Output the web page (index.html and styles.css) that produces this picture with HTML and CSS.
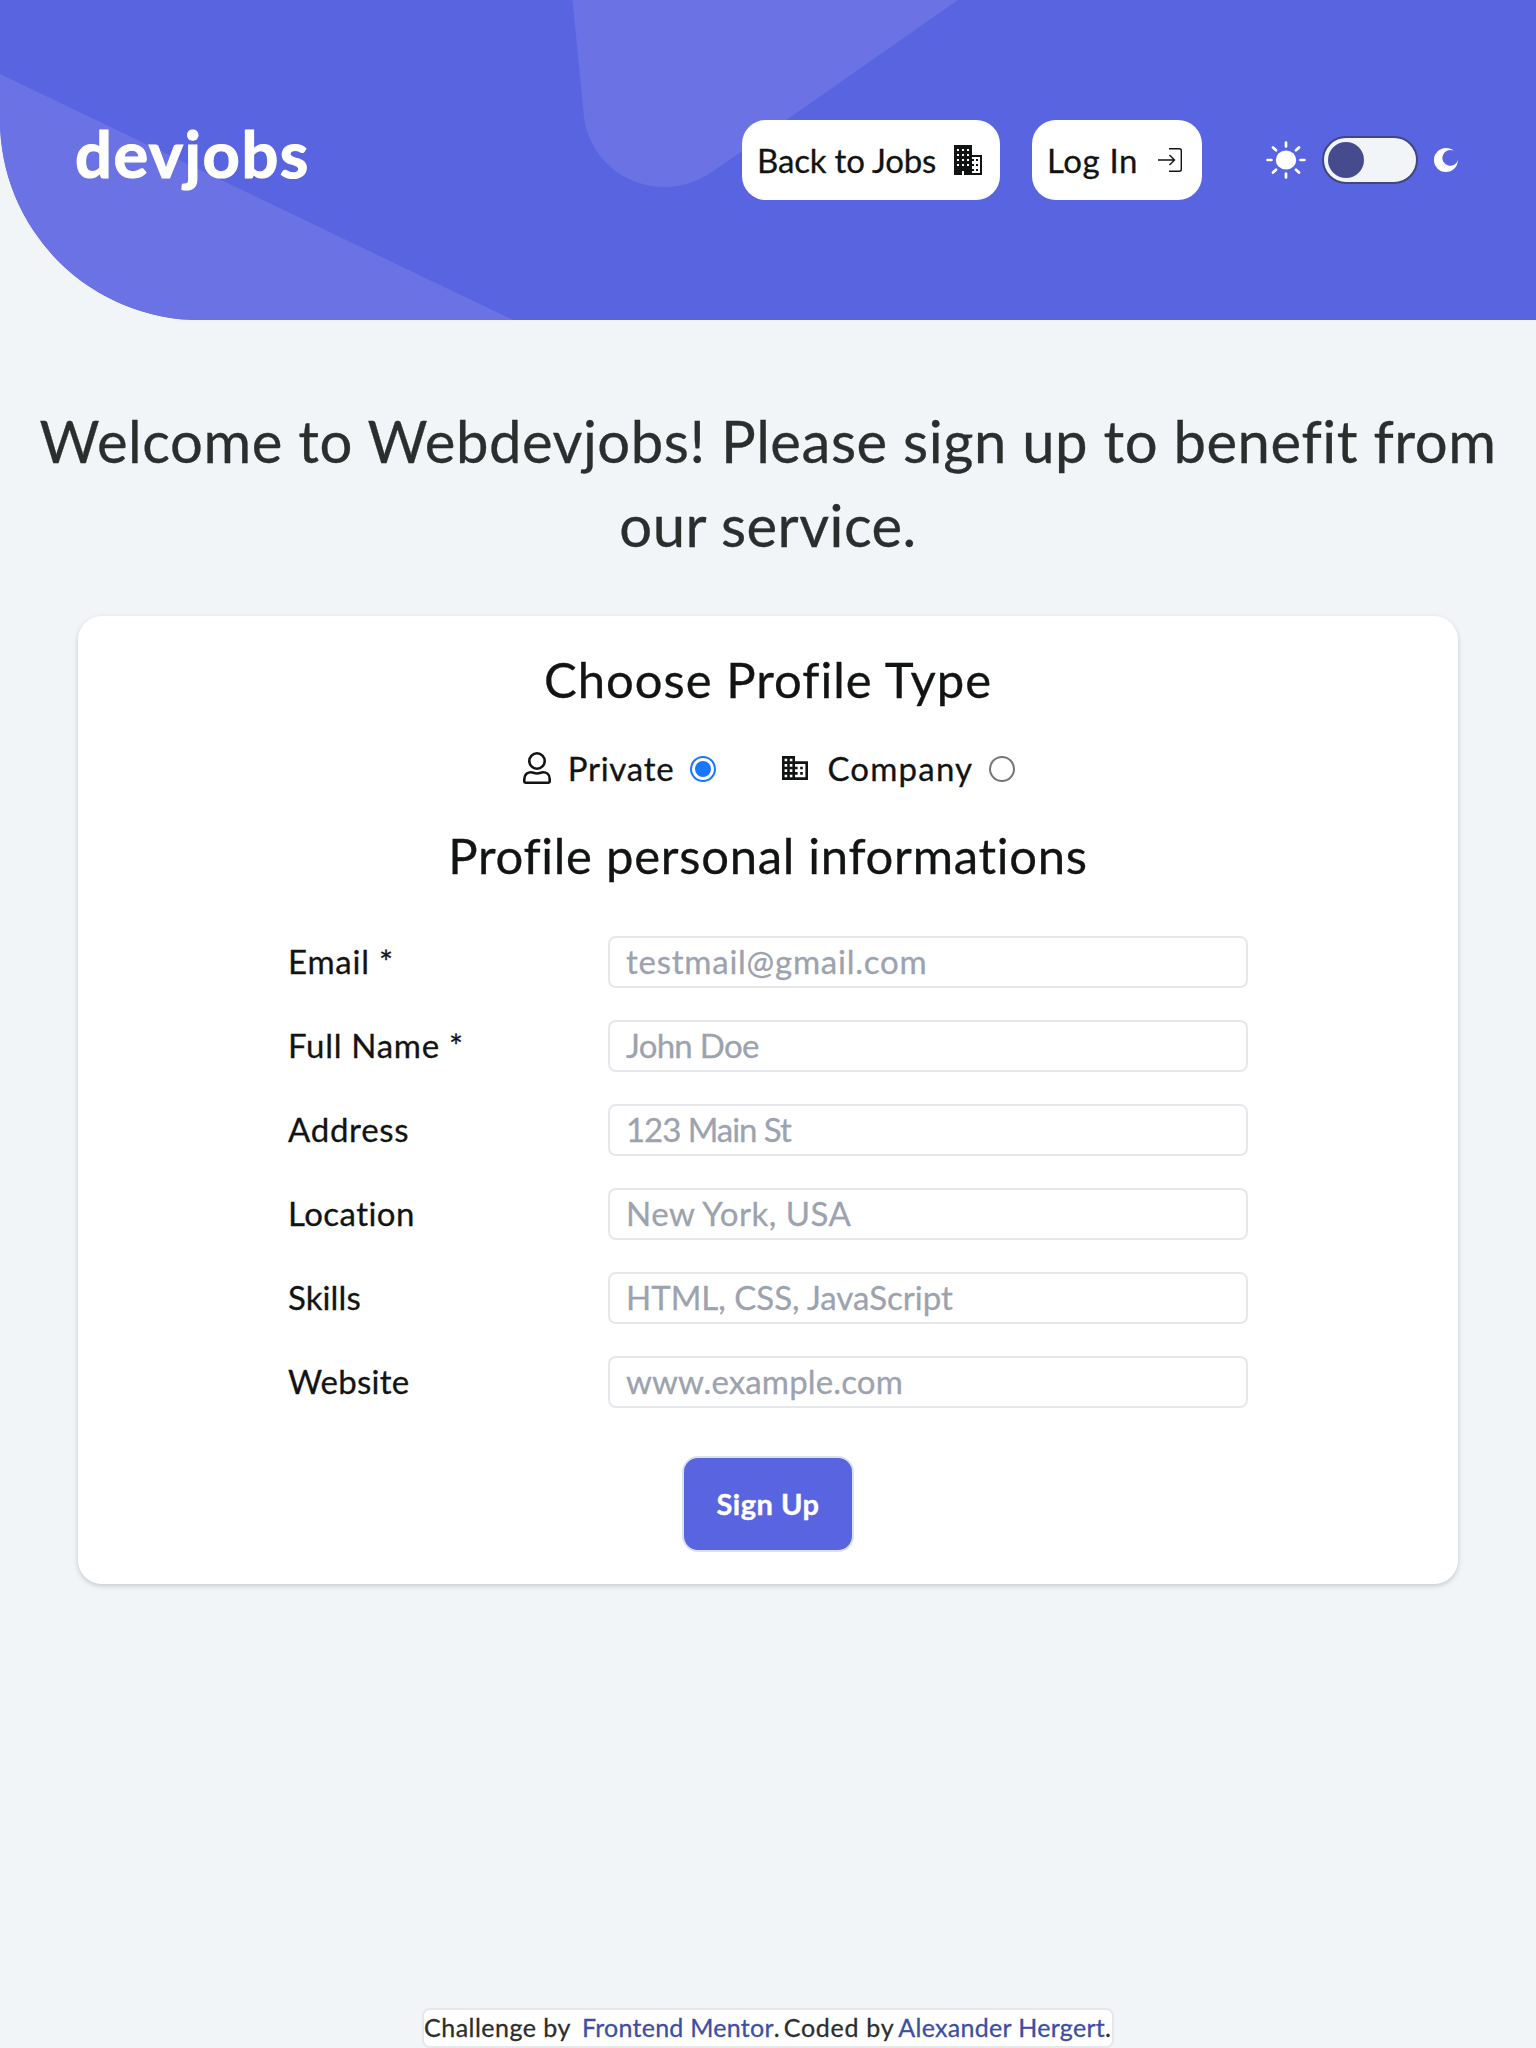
FILE: index.html
```html
<!DOCTYPE html>
<html lang="en">
<head>
<meta charset="utf-8">
<title>devjobs</title>
<link rel="stylesheet" href="styles.css">
</head>
<body>
<header class="header">
  <svg class="header-art" viewBox="0 0 1536 320" aria-hidden="true">
    <path d="M0 74L513 320H0Z"/>
    <path d="M572.500 0L584 117C589 157 623 187 665 187C682 187 698 181 712 172L958 0Z"/>
  </svg>
  <a class="logo">devjobs</a>
  <nav class="nav">
    <a class="nav-btn back"><span class="t-back">Back to Jobs</span>
      <svg class="ico-building" width="28" height="30" viewBox="0 0 28 30"><path fill="#121414" fill-rule="evenodd" d="M0 0H18V10H28V30H10V26H8V30H0ZM3 4V6H5V4ZM8 4V6H10V4ZM13 4V6H15V4ZM3 9V11H5V9ZM8 9V11H10V9ZM13 9V11H15V9ZM3 14V16H5V14ZM8 14V16H10V14ZM13 14V16H15V14ZM3 19V21H5V19ZM8 19V21H10V19ZM13 19V21H15V19ZM18 12V14H20V16H18V19H20V21H18V24H20V26H18V28H26V12ZM22 14H24V16H22ZM22 19H24V21H22ZM22 24H24V26H22Z"/></svg>
    </a>
    <a class="nav-btn login"><span class="t-login">Log In</span>
      <svg class="ico-login" width="24" height="24" viewBox="0 0 24 24" fill="none" stroke="#121414" stroke-width="1.400"><path d="M11 .7H21.300a2 2 0 0 1 2 2V21.300a2 2 0 0 1-2 2H11M0 12H16.500M11.500 7L16.500 12L11.500 17"/></svg>
    </a>
    <div class="theme">
      <svg class="ico-sun" width="40" height="38" viewBox="0 0 40 38"><ellipse cx="20" cy="19" rx="10.200" ry="9.600" fill="#fff"/><path fill="none" stroke="#fff" stroke-width="2.700" stroke-linecap="round" d="M20 1.500V5.500M20 32.500V36.500M1.500 19H5.500M34.500 19H38.500M7 6.500L10 9.300M33 6.500L30 9.300M7 31.500L10 28.700M33 31.500L30 28.700"/></svg>
      <span class="switch"><span class="knob"></span></span>
      <svg class="ico-moon" width="24" height="24" viewBox="0 0 24 24"><path fill="#fff" d="M12 0c3 0 5.700 1 8 2.800L18.500 2.300A7.900 7.900 0 1 0 23.900 12A12 12 0 1 1 12 0Z"/></svg>
    </div>
  </nav>
</header>
<main>
  <h1 class="title">Welcome to Webdevjobs! Please sign up to benefit from<br><span class="title-end">our service.</span></h1>
  <form class="card">
    <h2 class="h2 type">Choose Profile Type</h2>
    <div class="types">
      <label class="opt">
        <svg class="ico-user" width="28" height="32" viewBox="0 0 28 32" fill="none" stroke="#121414" stroke-width="2.600"><circle cx="14" cy="9" r="7.700"/><path d="M8 20.300C5 20.300 1.300 22 1.300 27V29.500a1.200 1.200 0 0 0 1.200 1.200H25.500a1.200 1.200 0 0 0 1.200-1.200V27C26.700 22 23 20.300 20 20.300C18 20.300 17 21.500 14 21.500S10 20.300 8 20.300Z"/></svg>
        <span class="t-private">Private</span><span class="radio on"></span>
      </label>
      <label class="opt">
        <svg class="ico-office" width="26" height="24" viewBox="2 3 20 18" preserveAspectRatio="none"><path fill="#121414" d="M12 7V3H2v18h20V7H12zM6 19H4v-2h2v2zm0-4H4v-2h2v2zm0-4H4V9h2v2zm0-4H4V5h2v2zm4 12H8v-2h2v2zm0-4H8v-2h2v2zm0-4H8V9h2v2zm0-4H8V5h2v2zm10 12h-8v-2h2v-2h-2v-2h2v-2h-2V9h8v10zm-2-8h-2v2h2v-2zm0 4h-2v2h2v-2z"/></svg>
        <span class="t-company">Company</span><span class="radio"></span>
      </label>
    </div>
    <h2 class="h2 info">Profile personal informations</h2>
    <div class="fields">
      <label class="f-email" for="email">Email *</label><input class="i-email" id="email" placeholder="testmail@gmail.com">
      <label class="f-name" for="name">Full Name *</label><input class="i-name" id="name" placeholder="John Doe">
      <label class="f-addr" for="addr">Address</label><input class="i-addr" id="addr" placeholder="123 Main St">
      <label class="f-loc" for="loc">Location</label><input class="i-loc" id="loc" placeholder="New York, USA">
      <label class="f-skills" for="skills">Skills</label><input class="i-skills" id="skills" placeholder="HTML, CSS, JavaScript">
      <label class="f-web" for="web">Website</label><input class="i-web" id="web" placeholder="www.example.com">
    </div>
    <button class="signup" type="button">Sign Up</button>
  </form>
</main>
<footer class="footer"><span class="c1">Challenge by</span><a class="c2">Frontend Mentor</a><span>.</span><span class="c3">Coded by</span><a class="c4">Alexander Hergert</a><span>.</span></footer>
</body>
</html>
```
FILE: styles.css
```css
* { box-sizing: border-box; }
body {
  margin: 0;
  height: 2048px;
  display: flex;
  flex-direction: column;
  align-items: stretch;
  overflow: hidden;
  background: #f1f5f8;
  color: #121414;
  font-family: Lato, "Liberation Sans", sans-serif;
  font-size: 33px;
  line-height: 48px;
  -webkit-text-stroke: 0.3px;
}
.header {
  position: relative;
  height: 320px;
  display: flex;
  justify-content: space-between;
  align-items: center;
  padding: 0 78px 0 75px;
  background: #5964e0;
  border-bottom-left-radius: 200px;
  overflow: hidden;
}
.header-art { position: absolute; inset: 0; fill: #6a72e4; }
.logo {
  position: relative;
  font-size: 65px;
  font-weight: 700;
  line-height: 80px;
  letter-spacing: 1.5px;
  -webkit-text-stroke: 1.2px;
  color: #fff;
  padding-bottom: 14px;
}
.nav { position: relative; display: flex; align-items: center; }
.nav-btn {
  height: 80px;
  display: flex;
  align-items: center;
  justify-content: space-between;
  background: #fff;
  border-radius: 24px;
  white-space: nowrap;
}
.nav-btn span { padding-bottom: 1px; }
.back { width: 258px; margin-right: 32px; padding: 0 18px 0 15px; }
.login { width: 170px; margin-right: 64px; padding: 0 20px 0 15px; }
.t-back { letter-spacing: -0.17px; }
.t-login { letter-spacing: 0.6px; }
.theme { display: flex; align-items: center; }
.switch {
  width: 96px;
  height: 48px;
  margin: 0 16px;
  padding: 4px;
  background: #f1f5f8;
  border: 2px solid #42467e;
  border-radius: 24px;
}
.knob { display: block; width: 36px; height: 36px; border-radius: 50%; background: #454b8d; }
.title {
  margin: 79px 0 0;
  font-size: 58px;
  font-weight: 400;
  line-height: 84px;
  letter-spacing: 0.535px;
  text-align: center;
  white-space: nowrap;
  color: #2c2e2e;
}
.title-end { letter-spacing: 0.43px; }
.card {
  margin: 49px 78px 0;
  height: 968px;
  display: flex;
  flex-direction: column;
  align-items: center;
  padding-top: 27px;
  background: #fff;
  border-radius: 24px;
  box-shadow: 0 2px 6px rgba(0, 0, 0, 0.1), 0 2px 4px rgba(0, 0, 0, 0.08);
}
.h2 { margin: 0; font-size: 49px; font-weight: 400; line-height: 72px; }
.type { letter-spacing: 1px; }
.info { letter-spacing: 0.727px; margin-top: 27px; }
.types { display: flex; gap: 66px; margin-top: 29px; padding-left: 2px; }
.opt { display: flex; align-items: center; height: 48px; }
.ico-user { margin-right: 17px; }
.ico-office { margin-right: 19px; }
.t-private { letter-spacing: 0.76px; margin-right: 16px; }
.t-company { letter-spacing: 1.2px; margin-right: 16px; }
.radio {
  width: 26px;
  height: 26px;
  margin-top: 1px;
  border: 2px solid #767676;
  border-radius: 50%;
  background: #fff;
}
.radio.on { border-color: #1a75ff; padding: 3px; background: #1a75ff content-box; }
.fields {
  display: grid;
  grid-template-columns: 320px 640px;
  grid-auto-rows: 52px;
  row-gap: 32px;
  align-items: center;
  margin-top: 45px;
}
.fields label { padding-bottom: 2px; }
.fields input {
  width: 640px;
  height: 52px;
  padding: 0 16px 2px;
  border: 2px solid #e5e7eb;
  border-radius: 8px;
  background: #fff;
  font-family: inherit;
  font-size: 33px;
  -webkit-text-stroke: 0.3px;
}
.fields input::placeholder { color: #9ca3af; opacity: 1; }
.f-email { letter-spacing: 0.8px; }
.f-name { letter-spacing: 0.7px; }
.f-addr { letter-spacing: 0.72px; }
.f-loc { letter-spacing: 0.45px; }
.f-skills { letter-spacing: 0.1px; }
.f-web { letter-spacing: 0.25px; }
.i-email { letter-spacing: 0.76px; }
.i-name { letter-spacing: -0.7px; }
.i-addr { letter-spacing: -1.04px; }
.i-loc { letter-spacing: 0.5px; }
.i-skills { letter-spacing: 0; }
.i-web { letter-spacing: 0.14px; }
.signup {
  width: 172px;
  height: 96px;
  margin-top: 48px;
  padding: 0 0 2px;
  border: 2px solid #dbe2ea;
  border-radius: 16px;
  background: #5964e0;
  color: #fff;
  font-family: inherit;
  font-size: 29px;
  font-weight: 700;
  letter-spacing: 0.5px;
  -webkit-text-stroke: 0.4px;
}
.footer {
  align-self: center;
  margin-top: auto;
  width: 692px;
  height: 40px;
  display: flex;
  white-space: nowrap;
  background: #fff;
  border: 2px solid #e5e7eb;
  border-radius: 8px;
  font-size: 25px;
  line-height: 34px;
  color: #2c2e2e;
}
.footer a { color: #3c4fa3; }
.c1 { letter-spacing: 0.49px; margin-right: 11px; }
.c2 { letter-spacing: 0.26px; }
.c3 { letter-spacing: 0.73px; margin: 0 4px; }
.c4 { letter-spacing: 0.3px; }
```
